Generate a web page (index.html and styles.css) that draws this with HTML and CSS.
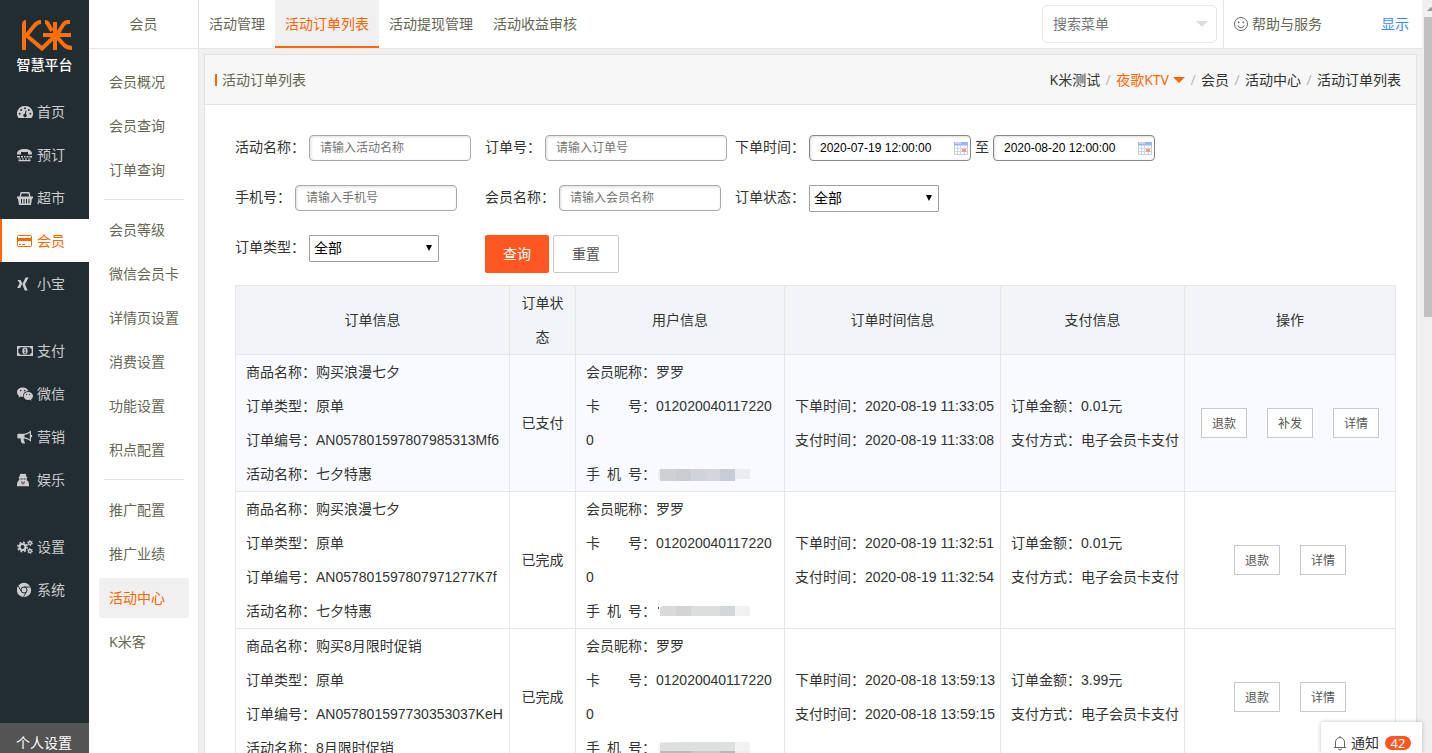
FILE: index.html
```html
<!DOCTYPE html>
<html lang="zh-CN">
<head>
<meta charset="utf-8">
<title>活动订单列表</title>
<link rel="stylesheet" href="styles.css">
</head>
<body>
<div class="app">
  <aside class="sidebar">
    <div class="brand">
      <svg class="brand-mark" width="54" height="32" viewBox="0 0 54 32" fill="none" stroke="#ff6f0a" stroke-width="4">
        <path d="M5 31V6q0-3 2-3"/>
        <path d="M7 17L15 7q3-4 7-4M7 16l16 13.500L36 17M26 3q2 0 3 2l4 7M51 3h-2q-3 0-5 3l-5 8M24 16h28M36 3v28M38 18l7 8q3 3 8 3"/>
      </svg>
      <span class="brand-name">智慧平台</span>
    </div>
    <nav class="main-nav">
      <div class="nav-group">
        <a class="nav-item" href="#"><svg class="icon" viewBox="0 0 16 16"><path fill="currentColor" fill-rule="evenodd" d="M8 2a7.500 7.500 0 0 0-6.500 12h13A7.500 7.500 0 0 0 8 2zM8 3.300a1 1 0 1 1 0 2 1 1 0 0 1 0-2zM4.200 5a1 1 0 1 1 0 2 1 1 0 0 1 0-2zm-1.500 3.700a1 1 0 1 1 0 2 1 1 0 0 1 0-2zm10.600 0a1 1 0 1 1 0 2 1 1 0 0 1 0-2zM11.800 5a1 1 0 1 1 0 2 1 1 0 0 1 0-2zM8.600 6.500l1 .3-.7 3.200a1.700 1.700 0 1 1-1.100-.2z"/></svg>首页</a>
        <a class="nav-item" href="#"><svg class="icon" viewBox="0 0 16 16" fill="currentColor"><path d="M0 7C0 3.500 3 2 7.500 2S15 3.500 15 7v.5h-4V5H4v2.500H0z"/><path d="M0 9h3v1.500H0zm4 0h2v1.500H4zm3 0h1.500v1.500H7zm2.500 0h2v1.500h-2zm3 0H15v1.500h-2.500zM1.500 11.500H4V12.500H1.500zm3.500 0h2v1H5zm3 0h2v1H8zm3 0h2.500v1H11zM1.500 13h12v1.300h-12z"/></svg>预订</a>
        <a class="nav-item" href="#"><svg class="icon" viewBox="0 0 16 16"><path fill="none" stroke="currentColor" stroke-width="1.400" d="M3 7l1.200-4.200h7.600L13 7"/><path fill="currentColor" fill-rule="evenodd" d="M0 6.500h16v2h-1L14 15H2L1 8.500H0zM4 9v4.500h1V9zm2.500 0v4.500h1V9zM9 9v4.500h1V9zm2.500 0v4.500h1V9z"/></svg>超市</a>
        <a class="nav-item is-active" href="#"><svg class="icon" viewBox="0 0 16 16"><rect x=".5" y="2.500" width="14" height="11" rx="1" fill="none" stroke="currentColor"/><path fill="currentColor" d="M.5 5h14v3H.5zM2 11h2v1H2zm3 0h3v1H5z"/></svg>会员</a>
        <a class="nav-item" href="#"><svg class="icon" viewBox="0 0 16 16" fill="currentColor"><path d="M.5 4h3l1.800 3.200L3.200 12h-3l2.500-4.700zM8.600 1.500h3L8 8.300l2.700 6.200H7.700L5.300 8.300z"/></svg>小宝</a>
      </div>
      <div class="nav-group">
        <a class="nav-item" href="#"><svg class="icon" viewBox="0 0 16 16"><path fill="currentColor" fill-rule="evenodd" d="M0 3h16v10H0zm3 1.300A2 2 0 0 1 1.300 6v4A2 2 0 0 1 3 11.700h10A2 2 0 0 1 14.700 10V6A2 2 0 0 1 13 4.300z"/><ellipse cx="8" cy="8" rx="2.700" ry="3.400" fill="currentColor"/><path d="M7.200 6.600l1-.6v3.700M7 9.900h2.300" fill="none" stroke="#222d32" stroke-width=".9"/></svg>支付</a>
        <a class="nav-item" href="#"><svg class="icon" viewBox="0 0 16 16"><path fill="currentColor" fill-rule="evenodd" d="M5.800 1.500C2.500 1.500 0 3.500 0 6.200c0 1.500.8 2.800 2 3.600L1.600 11.500l2-1a8 8 0 0 0 2.600.3C5.400 7.500 8 5 11.500 5.300 10.900 3 8.600 1.500 5.800 1.500zM3.800 3.800a.8.800 0 1 1 0 1.600.8.800 0 0 1 0-1.600zm4 0a.8.800 0 1 1 0 1.600.8.800 0 0 1 0-1.600z"/><path fill="currentColor" fill-rule="evenodd" d="M11.200 6c-2.700 0-4.600 1.800-4.600 4s1.900 4 4.600 4l1.700-.2 1.600.9-.4-1.500c1.100-.7 1.900-1.900 1.900-3.200 0-2.200-2.100-4-4.800-4zM9.700 8a.6.600 0 1 1 0 1.200.6.600 0 0 1 0-1.200zm3 0a.6.600 0 1 1 0 1.200.6.600 0 0 1 0-1.200z"/></svg>微信</a>
        <a class="nav-item" href="#"><svg class="icon" viewBox="0 0 16 16"><path fill="currentColor" fill-rule="evenodd" d="M14 1.500v4.300a1.300 1.300 0 0 1 0 2.600v4.300c-2-1.800-4.200-3-7-3.300-.7.900-.2 1.600.5 2.300-.6.700-.3 1.300.8 2.200-.9.900-3 .8-3.600.1-.5-1.500-1.400-2.900-.8-4.600H1.500A1.200 1.200 0 0 1 .3 8.200V6c0-.7.500-1.200 1.200-1.200h5C9.500 4.600 11.800 3.300 14 1.500zm-1.200 2.300A11 11 0 0 1 7.500 6v2.300c2 .3 3.800 1 5.300 2.100z"/></svg>营销</a>
        <a class="nav-item" href="#"><svg class="icon" viewBox="0 0 16 16"><path fill="currentColor" fill-rule="evenodd" d="M4 1.800l2 .2 2-.2c1 0 1.300 1.800 1.400 3l1.100.6c0 .5-.8.800-.8.800l.2 2c1.500.6 2.300 3 2.100 6H0c-.2-3 .6-5.400 2.100-6l.2-2s-.8-.3-.8-.8l1-.6c.1-1.200.4-3 1.500-3zM3.500 6.500v1h2v-1zm3 0v1h2v-1zM4.200 9l.9 4 .7-2.500zm3.600 0l-1.600 1.500.7 2.500z"/></svg>娱乐</a>
      </div>
      <div class="nav-group">
        <a class="nav-item" href="#"><svg class="icon" viewBox="0 0 16 16" fill="none" stroke="currentColor"><circle cx="5.500" cy="8" r="3" stroke-width="2.200"/><circle cx="5.500" cy="8" r="4.700" stroke-width="1.600" stroke-dasharray="1.900 1.790"/><circle cx="13" cy="4" r="1.500" stroke-width="1.300"/><circle cx="13" cy="4" r="2.500" stroke-width="1" stroke-dasharray="1.300 1.310"/><circle cx="13" cy="12" r="1.500" stroke-width="1.300"/><circle cx="13" cy="12" r="2.500" stroke-width="1" stroke-dasharray="1.300 1.310"/></svg>设置</a>
        <a class="nav-item" href="#"><svg class="icon" viewBox="0 0 16 16"><circle cx="7" cy="8" r="7.200" fill="currentColor"/><circle cx="7" cy="8" r="3" fill="none" stroke="#222d32" stroke-width="1"/><path d="M7 5h6.500M4.400 9.500L1.200 4M9.600 9.500L6.500 15" stroke="#222d32" stroke-width=".9" fill="none"/></svg>系统</a>
      </div>
    </nav>
    <a class="profile-link" href="#">个人设置</a>
  </aside>

  <aside class="submenu">
    <h2 class="submenu-title">会员</h2>
    <nav class="submenu-nav">
      <div class="sub-group">
        <a class="sub-item" href="#">会员概况</a>
        <a class="sub-item" href="#">会员查询</a>
        <a class="sub-item" href="#">订单查询</a>
      </div>
      <hr class="sub-rule">
      <div class="sub-group">
        <a class="sub-item" href="#">会员等级</a>
        <a class="sub-item" href="#">微信会员卡</a>
        <a class="sub-item" href="#">详情页设置</a>
        <a class="sub-item" href="#">消费设置</a>
        <a class="sub-item" href="#">功能设置</a>
        <a class="sub-item" href="#">积点配置</a>
      </div>
      <hr class="sub-rule">
      <div class="sub-group">
        <a class="sub-item" href="#">推广配置</a>
        <a class="sub-item" href="#">推广业绩</a>
        <a class="sub-item is-active" href="#">活动中心</a>
        <a class="sub-item" href="#">K米客</a>
      </div>
    </nav>
  </aside>

  <div class="main">
    <header class="topbar">
      <nav class="tabs">
        <a class="tab" href="#">活动管理</a>
        <a class="tab is-active" href="#">活动订单列表</a>
        <a class="tab" href="#">活动提现管理</a>
        <a class="tab" href="#">活动收益审核</a>
      </nav>
      <div class="menu-search">
        <input class="menu-search-input" type="text" placeholder="搜索菜单" aria-label="搜索菜单">
        <svg width="12" height="6" viewBox="0 0 12 6"><path d="M0 0h12L6 6z" fill="#ddd"/></svg>
      </div>
      <div class="topbar-links">
        <a class="help" href="#"><svg width="16" height="16" viewBox="0 0 16 16" fill="none" stroke="#666"><circle cx="8" cy="8" r="6.500"/><path d="M4.800 9.300a3.300 3.300 0 0 0 6.400 0"/><circle cx="5.700" cy="6.300" r=".5" fill="#666"/><circle cx="10.300" cy="6.300" r=".5" fill="#666"/></svg>帮助与服务</a>
        <a class="show-link" href="#">显示</a>
      </div>
    </header>

    <main class="card">
      <div class="card-head">
        <h1 class="card-title">活动订单列表</h1>
        <nav class="crumbs">
          <a href="#">K米测试</a><span class="sep">/</span>
          <a class="crumb-store" href="#">夜歌KTV<svg width="12" height="6" viewBox="0 0 12 6"><path d="M0 0h12L6 6z" fill="#ff6600"/></svg></a><span class="sep">/</span>
          <a href="#">会员</a><span class="sep">/</span>
          <a href="#">活动中心</a><span class="sep">/</span>
          <a href="#">活动订单列表</a>
        </nav>
      </div>

      <div class="card-body">
        <form class="filters">
          <div class="field"><label for="f-act">活动名称：</label><input class="text" id="f-act" type="text" placeholder="请输入活动名称"></div>
          <div class="field"><label for="f-no">订单号：</label><input class="text text-wide" id="f-no" type="text" placeholder="请输入订单号"></div>
          <div class="field">
            <label for="f-from">下单时间：</label>
            <div class="date"><input class="text" id="f-from" type="text" value="2020-07-19 12:00:00"><svg class="cal" viewBox="0 0 14 14"><path fill="#fff" stroke="#c3cbdd" d="M.5 1.500h13v12H.5z"/><path fill="#9fb4ea" d="M0 1h14v3.500H0z"/><path fill="#c9d3f3" d="M1 1h6v2H1z"/><path stroke="#cfd6e8" fill="none" d="M1 7.500h12M1 10.500h12M3.500 5v8M6.500 5v8M10.500 5v8"/><path fill="#ee9a78" d="M8 8h4v3H8z"/></svg></div>
            <label for="f-to">至</label>
            <div class="date"><input class="text" id="f-to" type="text" value="2020-08-20 12:00:00"><svg class="cal" viewBox="0 0 14 14"><path fill="#fff" stroke="#c3cbdd" d="M.5 1.500h13v12H.5z"/><path fill="#9fb4ea" d="M0 1h14v3.500H0z"/><path fill="#c9d3f3" d="M1 1h6v2H1z"/><path stroke="#cfd6e8" fill="none" d="M1 7.500h12M1 10.500h12M3.500 5v8M6.500 5v8M10.500 5v8"/><path fill="#ee9a78" d="M8 8h4v3H8z"/></svg></div>
          </div>
          <div class="field"><label for="f-tel">手机号：</label><input class="text" id="f-tel" type="text" placeholder="请输入手机号"></div>
          <div class="field"><label for="f-name">会员名称：</label><input class="text" id="f-name" type="text" placeholder="请输入会员名称"></div>
          <div class="field"><label for="f-status">订单状态：</label><div class="select"><select id="f-status"><option>全部</option></select></div></div>
          <div class="field"><label for="f-type">订单类型：</label><div class="select"><select id="f-type"><option>全部</option></select></div></div>
          <div class="field"><button class="btn btn-primary" type="button">查询</button><button class="btn btn-plain" type="reset">重置</button></div>
        </form>

        <table class="orders">
          <colgroup><col class="c-info"><col class="c-status"><col class="c-user"><col class="c-time"><col class="c-pay"><col></colgroup>
          <thead>
            <tr><th>订单信息</th><th>订单状态</th><th>用户信息</th><th>订单时间信息</th><th>支付信息</th><th>操作</th></tr>
          </thead>
          <tbody>
            <tr class="is-hover">
              <td>商品名称：购买浪漫七夕<br>订单类型：原单<br>订单编号：AN057801597807985313Mf6<br>活动名称：七夕特惠</td>
              <td class="center">已支付</td>
              <td class="wrap">会员昵称：罗罗<br><span class="spread"><i>卡</i><i>号</i></span>：0120200401172200<br><span class="spread"><i>手</i><i>机</i><i>号</i></span>：<svg class="mask" viewBox="0 0 92 14"><path fill="#ededf2" d="M0 2h2v9H0z"/><path fill="#cfcfd6" d="M2 1h16v12H2z"/><path fill="#cbcbd2" d="M18 1h15v12H18z"/><path fill="#d0d3da" d="M33 1h15v12H33z"/><path fill="#d6d5dc" d="M48 1h14v12H48z"/><path fill="#c9ccd6" d="M62 1h15v12H62z"/><path fill="#ebecf2" d="M77 1h15v10H77z"/></svg></td>
              <td>下单时间：2020-08-19 11:33:05<br>支付时间：2020-08-19 11:33:08</td>
              <td>订单金额：0.01元<br>支付方式：电子会员卡支付</td>
              <td class="ops"><div class="op-row"><button class="op" type="button">退款</button><button class="op" type="button">补发</button><button class="op" type="button">详情</button></div></td>
            </tr>
            <tr>
              <td>商品名称：购买浪漫七夕<br>订单类型：原单<br>订单编号：AN057801597807971277K7f<br>活动名称：七夕特惠</td>
              <td class="center">已完成</td>
              <td class="wrap">会员昵称：罗罗<br><span class="spread"><i>卡</i><i>号</i></span>：0120200401172200<br><span class="spread"><i>手</i><i>机</i><i>号</i></span>：<svg class="mask" viewBox="0 0 92 14"><path fill="#555" d="M0 2h1v2H0zM9 10h3v1H9z"/><path fill="#d9d9d9" d="M5 1h13v10H2V3z"/><path fill="#d3d4d4" d="M18 1h15v10H18z"/><path fill="#dcdddd" d="M33 1h29v10H33z"/><path fill="#d2d8da" d="M62 1h15v10H62z"/><path fill="#f2f2f2" d="M77 1h15v10H77z"/></svg></td>
              <td>下单时间：2020-08-19 11:32:51<br>支付时间：2020-08-19 11:32:54</td>
              <td>订单金额：0.01元<br>支付方式：电子会员卡支付</td>
              <td class="ops"><div class="op-row"><button class="op" type="button">退款</button><button class="op" type="button">详情</button></div></td>
            </tr>
            <tr>
              <td>商品名称：购买8月限时促销<br>订单类型：原单<br>订单编号：AN057801597730353037KeH<br>活动名称：8月限时促销</td>
              <td class="center">已完成</td>
              <td class="wrap">会员昵称：罗罗<br><span class="spread"><i>卡</i><i>号</i></span>：0120200401172200<br><span class="spread"><i>手</i><i>机</i><i>号</i></span>：<svg class="mask" viewBox="0 0 92 14"><path fill="#f2f2f2" d="M2 0h90v9H0V3z"/><path fill="#dedfdf" d="M2 1l24-1h51v9H2z"/><path fill="#b9bbbb" d="M2 9h31v5H2z"/><path fill="#c9c9c9" d="M33 9h29v5H33z"/><path fill="#b5b8bd" d="M62 9h15v5H62z"/><path fill="#ececec" d="M77 9h15v5H77z"/></svg></td>
              <td>下单时间：2020-08-18 13:59:13<br>支付时间：2020-08-18 13:59:15</td>
              <td>订单金额：3.99元<br>支付方式：电子会员卡支付</td>
              <td class="ops"><div class="op-row"><button class="op" type="button">退款</button><button class="op" type="button">详情</button></div></td>
            </tr>
          </tbody>
        </table>
      </div>
    </main>

    <a class="notice" href="#"><svg width="14" height="16" viewBox="0 0 14 16" fill="none" stroke="#666"><path d="M.8 12.500h12.400M2.500 12.500V7a4.500 4.500 0 0 1 9 0v5.500M7 2.500V1M5.500 13.500a1.500 1.500 0 0 0 3 0"/></svg>通知<span class="badge">42</span></a>
  </div>

  <div class="scroll-track"><svg width="8" height="17" viewBox="0 0 8 17"><path d="M3 11l4-4 1 1v3z" fill="#999"/></svg><div class="scroll-thumb"></div></div>
</div>
</body>
</html>
```
FILE: styles.css
```css
* { box-sizing: border-box; }
body {
  margin: 0;
  font: 14px/20px "Noto Sans", "Noto Sans CJK SC", sans-serif;
  color: #333;
  background: #f0f0f0;
}
a { color: inherit; text-decoration: none; }
input, select, button { font: inherit; margin: 0; }
svg { flex: none; }

.app { display: flex; height: 100vh; overflow: hidden; }

/* primary sidebar */
.sidebar { flex: none; width: 89px; display: flex; flex-direction: column; background: #222d32; color: #ccc; }
.brand { height: 90px; display: flex; flex-direction: column; align-items: center; padding-top: 19px; }
.brand-mark { margin-left: 2px; }
.brand-name { margin-top: 4px; font-size: 14px; font-weight: 500; color: #fff; }
.main-nav { flex: 1; display: flex; flex-direction: column; gap: 24px; }
.nav-item { display: flex; align-items: center; gap: 4px; height: 43px; padding-left: 17px; }
.nav-item.is-active { background: #fff; color: #ff6600; border-left: 2px solid #ff6600; padding-left: 15px; }
.icon { width: 16px; height: 16px; }
.profile-link { flex: none; height: 30px; padding: 10px 0 0 16px; background: #545454; color: #fff; }

/* secondary menu */
.submenu { flex: none; width: 110px; background: #fff; border-right: 1px solid #e6e6e6; color: #666655; }
.submenu-title { margin: 0; height: 49px; border-bottom: 1px solid #e6e6e6; text-align: center; font-size: 14px; font-weight: 400; line-height: 48px; }
.submenu-nav { padding: 13px 9px 0 10px; }
.sub-group { display: grid; gap: 4px; }
.sub-item { height: 40px; padding-left: 10px; line-height: 40px; border-radius: 2px; }
.sub-item.is-active { background: #f0f0f0; color: #ff6600; }
.sub-rule { height: 1px; margin: 9px 5px 10px; border: 0; background: #e2e2e2; }

/* top bar */
.main { flex: 1; min-width: 0; position: relative; display: flex; flex-direction: column; }
.topbar { flex: none; display: flex; align-items: center; height: 49px; background: #fff; border-bottom: 1px solid #e6e6e6; color: #666655; }
.tabs { flex: 1; display: flex; align-self: stretch; }
.tab { padding: 0 10px; line-height: 48px; }
.tab.is-active { background: #f0f0f0; color: #ff6600; box-shadow: inset 0 -2px #ff6600; }
.menu-search { display: flex; align-items: center; width: 175px; height: 38px; margin-right: 6px; padding: 0 8px 0 10px; border: 1px solid #e6e6e6; border-radius: 5px; }
.menu-search-input { flex: 1; min-width: 0; padding: 0; border: 0; outline: 0; background: none; }
.menu-search-input::placeholder { color: #757575; opacity: 1; }
.topbar-links { display: flex; align-items: center; justify-content: space-between; align-self: stretch; width: 199px; padding: 0 13px 0 9px; border-left: 1px solid #e6e6e6; }
.help { display: flex; align-items: center; gap: 3px; }
.show-link { color: #3c87ff; }

/* card */
.card { flex: 1; min-height: 0; margin: 5px 5px 0 5px; border: 1px solid #e2e2e2; border-bottom: 0; background: #fff; overflow: hidden; }
.card-head { display: flex; align-items: center; justify-content: space-between; height: 50px; padding: 0 15px 0 10px; background: #f7f7f7; border-bottom: 1px solid #e2e2e2; }
.card-title { display: flex; align-items: center; gap: 5px; margin: 0; font-size: 14px; font-weight: 400; color: #666655; }
.card-title::before { content: ""; width: 2px; height: 12px; background: #ff6600; }
.crumbs { display: flex; align-items: center; }
.sep { width: 16px; text-align: center; color: #bbb; }
.crumb-store { display: flex; align-items: center; gap: 4px; color: #ff6600; }
.card-body { padding: 30px 20px 0 30px; }

/* filters */
.filters { display: grid; grid-template-columns: 250px 250px 1fr; grid-auto-rows: 50px; line-height: 24px; }
.field { display: flex; align-items: flex-start; gap: 4px; }
.text { width: 162px; height: 26px; padding: 0 10px; border: 1px solid #aaa; border-radius: 4px; background: #fff; box-shadow: inset 1px 1px 3px #ddd; font-size: 12px; color: #000; font-family: "Liberation Sans", "Noto Sans CJK SC", sans-serif; }
.text-wide { width: 182px; }
.text::placeholder { color: #757575; opacity: 1; }
.date { position: relative; display: flex; }
.date .text { border-color: #888; }
.cal { position: absolute; right: 3px; top: 6px; width: 14px; height: 14px; }
.select { position: relative; }
.select select { display: block; appearance: none; width: 130px; height: 27px; padding: 0 20px 1px 4px; border: 1px solid #a0a0a0; border-radius: 1px; background: #fff; color: #000; }
.select::after { content: ""; position: absolute; right: 7px; top: 10px; border: solid transparent; border-width: 6px 3px 0; border-top-color: #000; pointer-events: none; }
.btn { height: 38px; border-radius: 2px; border: 1px solid #c9c9c9; background: #fff; color: #555; width: 66px; padding: 0; }
.btn-primary { width: 64px; border: 0; background: #ff5722; color: #fff; }

/* orders table */
.orders { width: 100%; table-layout: fixed; border-collapse: collapse; line-height: 34px; font-family: "Liberation Sans", "Noto Sans CJK SC", sans-serif; }
.c-info { width: 274px; }
.c-status { width: 66px; }
.c-user { width: 209px; }
.c-time { width: 216px; }
.c-pay { width: 184px; }
.orders th, .orders td { padding: 0 5px 0 10px; border: 1px solid #e6e6e6; white-space: nowrap; }
.orders th { padding: 0 10px; background: #f2f4f8; font-weight: 400; white-space: normal; }
.orders .is-hover { background: #f8faff; }
.orders .center { padding: 0 10px; text-align: center; }
.orders .wrap { white-space: normal; word-break: break-all; }
.spread { display: inline-flex; justify-content: space-between; width: 56px; }
.spread i { font-style: normal; }
.mask { width: 92px; height: 14px; margin-left: 2px; vertical-align: middle; }
.orders .ops { padding: 0; }
.op-row { display: flex; justify-content: center; gap: 20px; }
.op { width: 46px; height: 30px; padding: 2px 0 0; border: 1px solid #c9c9c9; background: #fff; color: #555; font-size: 12px; line-height: 24px; }

/* notification tab */
.notice { position: absolute; right: 0; bottom: 0; display: flex; align-items: center; gap: 4px; height: 31px; padding: 10px 11px 0 12px; background: #fff; border-radius: 3px 0 0 0; box-shadow: 0 0 4px rgba(0, 0, 0, .25); }
.badge { margin-left: 2px; width: 26px; height: 14px; border-radius: 7px; background: #ff5722; color: #fff; font-size: 13px; line-height: 14px; text-align: center; }

/* scrollbar */
.scroll-track { flex: none; width: 10px; padding-left: 2px; background: #f0f0f0; display: flex; flex-direction: column; }
.scroll-thumb { height: 300px; background: #c1c1c1; }
```
